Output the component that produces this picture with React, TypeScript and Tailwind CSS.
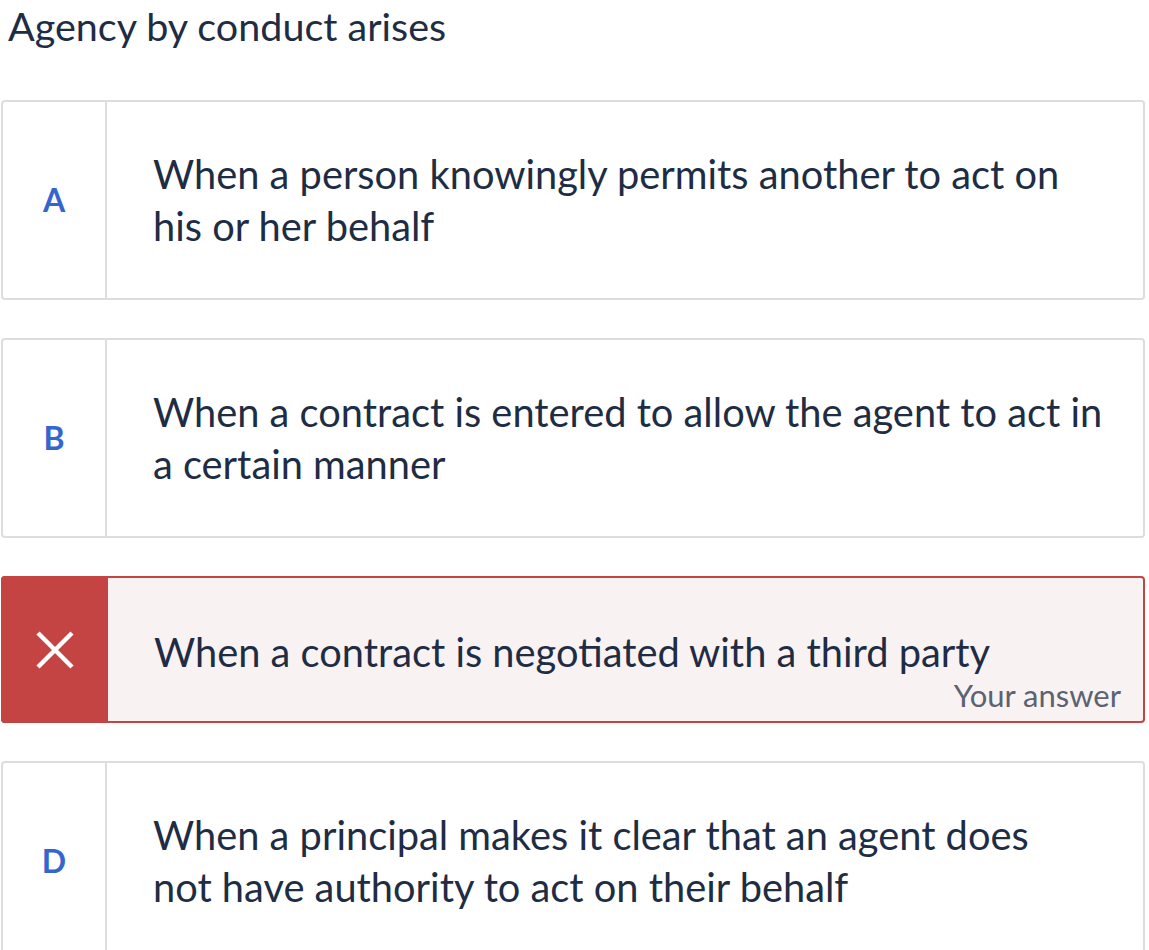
import React from "react";

const font = { fontFamily: "Lato, 'Noto Sans', sans-serif" };

function Card({ letter, lines }: { letter: string; lines: string[] }) {
  return (
    <div className="flex rounded-[4px] border-2 border-[#dcdde1] bg-white">
      <div className="flex w-[104px] shrink-0 items-center justify-center border-r-2 border-[#dcdde1] text-[32px] font-bold text-[#3565cf]">
        {letter}
      </div>
      <div className="flex-1 py-[46px] pl-[46px] pr-6 text-[39.8px] leading-[52px] text-[#1e2c44]">
        {lines.map((l, i) => (
          <div key={i}>{l}</div>
        ))}
      </div>
    </div>
  );
}

export default function App() {
  return (
    <div className="min-h-[950px] bg-white" style={font}>
      <div className="pl-[8px] pt-[4px] text-[39.5px] leading-[44px] text-[#1e2c44]">Agency by conduct arises</div>
      <div className="mt-[52px] flex flex-col gap-[38px] pl-[1px] pr-[4px]">
        <Card letter="A" lines={["When a person knowingly permits another to act on", "his or her behalf"]} />
        <Card letter="B" lines={["When a contract is entered to allow the agent to act in", "a certain manner"]} />
        <div className="flex rounded-[4px] border-2 border-[#c44343] bg-[#f9f2f3]">
          <div className="-my-[2px] -ml-[2px] flex w-[107px] shrink-0 items-center justify-center rounded-l-[4px] bg-[#c44343]">
            <svg width="42" height="42" viewBox="0 0 42 42" fill="none" stroke="white" strokeWidth="4.5">
              <path d="M4 4 L38 38 M38 4 L4 38" />
            </svg>
          </div>
          <div className="flex-1 pl-[46px] pr-[22px] pt-[48px] pb-[9px] text-[#1e2c44]">
            <div className="text-[39.8px] leading-[52px]">When a contract is negotiated with a third party</div>
            <div className="text-right text-[31px] leading-[34px] text-[#5b6270]">Your answer</div>
          </div>
        </div>
        <Card letter="D" lines={["When a principal makes it clear that an agent does", "not have authority to act on their behalf"]} />
      </div>
    </div>
  );
}
